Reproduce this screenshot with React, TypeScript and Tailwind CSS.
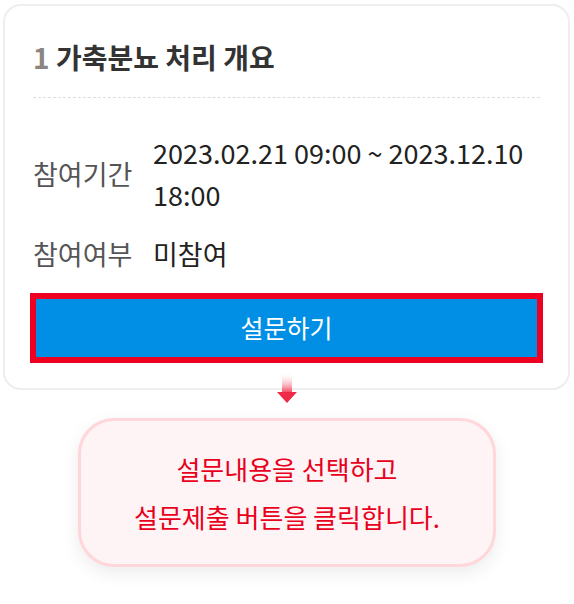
import React from "react";

export default function App() {
  return (
    <div
      className="relative w-[574px] h-[604px] bg-white overflow-hidden"
      style={{ fontFamily: '"Noto Sans CJK KR", "Noto Sans", sans-serif' }}
    >
      <div className="ml-[3px] mt-[4px] w-[567px] h-[386px] border-2 border-[#eeeeee] rounded-[18px] bg-white px-[28px] pt-[33px]">
        <div className="h-[36px] leading-[36px] text-[28px] font-bold tracking-[0px] text-[#333333]">
          <span className="text-[#8a8580]">1</span> 가축분뇨 처리 개요
        </div>
        <div className="mt-[22px] border-t border-dashed border-[#dddddd]" />
        <div className="mt-[34px] flex items-center">
          <div className="w-[120px] text-[27px] text-[#555555] tracking-[0px]">참여기간</div>
          <div className="flex-1 text-[27px] leading-[42px] text-[#222222] tracking-[0px]">
            2023.02.21 09:00 ~ 2023.12.10
            <br />
            18:00
          </div>
        </div>
        <div className="mt-[17px] flex items-center h-[42px]">
          <div className="w-[120px] text-[27px] text-[#555555] tracking-[0px]">참여여부</div>
          <div className="flex-1 text-[27px] text-[#222222] tracking-[0px]">미참여</div>
        </div>
        <div className="-mx-[3px] mt-[18px] h-[70px] border-[6px] border-[#ee0022] bg-[#008fe5] flex items-center justify-center text-white text-[25px] tracking-[0px]">
          설문하기
        </div>
      </div>

      <svg
        className="absolute left-[277px] top-[372px]"
        width="20"
        height="32"
        viewBox="0 0 20 32"
      >
        <defs>
          <linearGradient id="shaft" x1="0" y1="0" x2="0" y2="1">
            <stop offset="0" stopColor="#ffffff" stopOpacity="0" />
            <stop offset="1" stopColor="#f0405a" />
          </linearGradient>
        </defs>
        <rect x="5" y="0" width="10" height="21" fill="url(#shaft)" />
        <polygon points="0,20 20,20 10,31" fill="#ee2a48" />
      </svg>

      <div className="mx-auto mt-[28px] w-[418px] h-[149px] rounded-[36px] border-[3px] border-[#ffd6da] bg-[#fff4f5] shadow-[0_6px_18px_rgba(0,0,0,0.08)] flex flex-col items-center justify-center text-[#e8001c] text-[26px] leading-[48px] tracking-[0px]">
        <div>설문내용을 선택하고</div>
        <div>설문제출 버튼을 클릭합니다.</div>
      </div>
    </div>
  );
}
